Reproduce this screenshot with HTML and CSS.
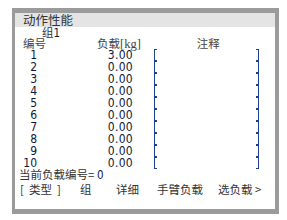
FILE: index.html
```html
<!DOCTYPE html>
<html lang="zh">
<head>
    <meta charset="UTF-8">
    <title>动作性能</title>
    <link rel="stylesheet" href="styles.css">
</head>
<body>
    <div class="frame">
        <div class="panel">
            <div class="title">动作性能</div>
            <div class="group">组<span class="num">1</span></div>

            <!-- 表头 -->
            <div class="head">
                <span class="h-no">编号</span>
                <span class="h-load">负载<span class="kg">[kg]</span></span>
                <span class="h-note">注释</span>
            </div>

            <!-- 负载列表 -->
            <div class="rows">
                <div class="row"><span class="no">1</span><span class="val">3.00</span><span class="note"><i class="lb"></i><i class="rb"></i></span></div>
                <div class="row"><span class="no">2</span><span class="val">0.00</span><span class="note"><i class="lb"></i><i class="rb"></i></span></div>
                <div class="row"><span class="no">3</span><span class="val">0.00</span><span class="note"><i class="lb"></i><i class="rb"></i></span></div>
                <div class="row"><span class="no">4</span><span class="val">0.00</span><span class="note"><i class="lb"></i><i class="rb"></i></span></div>
                <div class="row"><span class="no">5</span><span class="val">0.00</span><span class="note"><i class="lb"></i><i class="rb"></i></span></div>
                <div class="row"><span class="no">6</span><span class="val">0.00</span><span class="note"><i class="lb"></i><i class="rb"></i></span></div>
                <div class="row"><span class="no">7</span><span class="val">0.00</span><span class="note"><i class="lb"></i><i class="rb"></i></span></div>
                <div class="row"><span class="no">8</span><span class="val">0.00</span><span class="note"><i class="lb"></i><i class="rb"></i></span></div>
                <div class="row"><span class="no">9</span><span class="val">0.00</span><span class="note"><i class="lb"></i><i class="rb"></i></span></div>
                <div class="row"><span class="no">10</span><span class="val">0.00</span><span class="note"><i class="lb"></i><i class="rb"></i></span></div>
            </div>

            <div class="current">当前负载编号= <span class="num">0</span></div>

            <!-- 底部菜单 -->
            <div class="menu">
                <span class="m-type"><span>[</span><span>类型</span><span>]</span></span>
                <span class="m-group">组</span>
                <span class="m-detail">详细</span>
                <span class="m-arm">手臂负载</span>
                <span class="m-select">选负载 &gt;</span>
            </div>
        </div>
    </div>
</body>
</html>
```

FILE: styles.css
```css
body {
    margin: 0;
    background-color: #fff;
    font-family: "Noto Sans CJK SC", "DejaVu Sans", sans-serif;
    color: #333;
}
.frame {
    margin: 8px 0 0 12px;
    width: 267px;
    height: 206px;
    box-sizing: border-box;
    padding: 5px 4px 5px 3px;
    background-color: #9b9b9b;
}
.panel {
    height: 100%;
    background-color: #fff;
}
.title {
    height: 14px;
    line-height: 14px;
    padding-left: 8px;
    font-size: 12.5px;
    background-color: #e4e4e4;
    color: #333;
}
.num,
.no,
.val {
    font-family: "DejaVu Sans Condensed", "DejaVu Sans", sans-serif;
    color: #101838;
}
.group {
    height: 10px;
    line-height: 10px;
    padding-left: 27px;
    font-size: 11.5px;
}
.head {
    display: flex;
    height: 12px;
    line-height: 12px;
    font-size: 11.5px;
    color: #444;
}
.h-no {
    width: 74px;
    padding-left: 8px;
}
.kg {
    font-family: "Liberation Serif", serif;
    font-size: 12.5px;
}
.h-note {
    margin-left: 56px;
}
.row {
    display: flex;
    align-items: center;
    height: 12px;
    line-height: 12px;
    font-size: 12px;
}
.no {
    width: 22px;
    text-align: right;
}
.val {
    width: 96px;
    text-align: right;
    letter-spacing: 0.3px;
}
.note {
    display: flex;
    justify-content: space-between;
    width: 105px;
    margin-left: 21px;
}
.lb,
.rb {
    display: block;
    width: 2px;
    height: 10px;
    border: 1px solid #1d3f98;
}
.lb {
    border-right: none;
}
.rb {
    border-left: none;
}
.current {
    height: 10px;
    line-height: 10px;
    padding-left: 4px;
    font-size: 11.5px;
}
.menu {
    display: flex;
    height: 12px;
    line-height: 12px;
    margin-top: 4px;
    font-size: 11.5px;
}
.m-type {
    display: flex;
    gap: 5px;
    width: 60px;
    padding-left: 5px;
}
.m-group {
    width: 36px;
}
.m-detail {
    width: 41px;
}
.m-arm {
    width: 61px;
}
```
